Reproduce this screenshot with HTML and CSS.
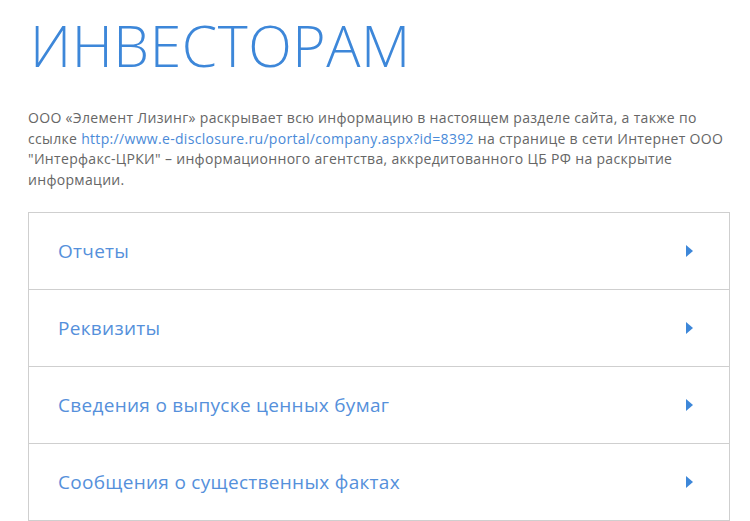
FILE: index.html
```html
<!DOCTYPE html>
<html lang="ru">
<head>
<meta charset="utf-8">
<link rel="stylesheet" href="styles.css">
</head>
<body>
<main class="page">
  <h1 class="title">ИНВЕСТОРАМ</h1>
  <p class="intro">ООО «Элемент Лизинг» раскрывает всю информацию в настоящем разделе сайта, а также по ссылке <a href="#" class="link">http://www.e-disclosure.ru/portal/company.aspx?id=8392</a> на странице в сети Интернет ООО "Интерфакс-ЦРКИ" – информационного агентства, аккредитованного ЦБ РФ на раскрытие информации.</p>
  <ul class="list">
    <li class="item"><span class="item-text">Отчеты</span><span class="arrow"></span></li>
    <li class="item"><span class="item-text">Реквизиты</span><span class="arrow"></span></li>
    <li class="item"><span class="item-text">Сведения о выпуске ценных бумаг</span><span class="arrow"></span></li>
    <li class="item"><span class="item-text">Сообщения о существенных фактах</span><span class="arrow"></span></li>
  </ul>
</main>
</body>
</html>
```
FILE: styles.css
```css
html, body { margin: 0; padding: 0; background: #fff; }
body { font-family: "Open Sans", "Liberation Sans", sans-serif; overflow: hidden; }
.page { padding: 10px 15px 0 28px; }
.title {
  margin: 0 0 0 2px;
  font-weight: 300;
  font-size: 57px;
  line-height: 70px;
  color: #3d87d9;
  letter-spacing: 0.6px;
}
.intro {
  margin: 28px 0 21px;
  font-size: 14px;
  line-height: 20.7px;
  color: #666;
  letter-spacing: 0.32px;
  width: 706px;
}
.link { color: #4a8ad8; text-decoration: none; }
.list {
  list-style: none;
  margin: 0;
  padding: 0;
  width: 700px;
  border: 1px solid #cfcfcf;
  border-bottom: none;
}
.item {
  height: 76px;
  border-bottom: 1px solid #cfcfcf;
  display: flex;
  align-items: center;
  justify-content: space-between;
  padding: 0 36px 0 29px;
}
.item-text { font-size: 19px; color: #5590db; font-weight: 400; letter-spacing: 0.3px; }
.arrow {
  width: 0; height: 0;
  border-top: 6px solid transparent;
  border-bottom: 6px solid transparent;
  border-left: 7px solid #3d87d9;
}
```
